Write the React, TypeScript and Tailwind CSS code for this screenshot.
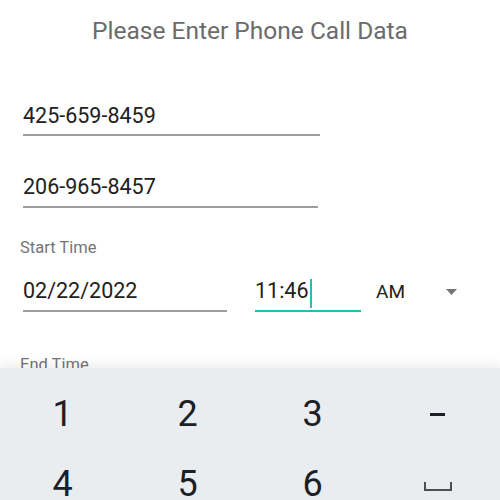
import React from 'react'

const font = "font-['Roboto','Liberation_Sans',sans-serif]"

function Field({ value, width }: { value: string; width: string }) {
    return (
        <div className={`ml-[3px] ${width}`}>
            <div className="text-[21.5px] leading-none text-[#212121]">{value}</div>
            <div className="mt-[8px] h-[2px] bg-[#9e9e9e]" />
        </div>
    )
}

export default function App() {
    const rows = [
        ['1', '2', '3', '−'],
        ['4', '5', '6', 'space'],
    ]

    return (
        <div className={`w-[500px] h-[500px] bg-white overflow-hidden flex flex-col ${font}`}>
            {/* Form */}
            <div className="h-[368px] shrink-0 overflow-hidden px-[20px]">
                <h1 className="pt-[19px] text-center text-[24.5px] leading-none text-[#6b6b6b] font-normal">
                    Please Enter Phone Call Data
                </h1>

                <div className="mt-[61px]">
                    <Field value="425-659-8459" width="w-[297px]" />
                </div>
                <div className="mt-[40px]">
                    <Field value="206-965-8457" width="w-[295px]" />
                </div>

                <div className="mt-[32px] text-[16.5px] leading-none text-[#757575]">Start Time</div>

                <div className="mt-[24px] flex items-start">
                    <Field value="02/22/2022" width="w-[204px]" />
                    <div className="ml-[28px] w-[106px]">
                        <div className="h-[21.5px] flex items-center text-[21.5px] leading-none text-[#212121]">
                            11:46
                            <span className="ml-px w-[2px] h-[29px] bg-[#26bfae] -mb-[6px]" />
                        </div>
                        <div className="mt-[8px] h-[2px] bg-[#26bfae]" />
                    </div>
                    <div className="ml-[15px] pt-[2px] text-[19px] leading-none text-[#212121]">AM</div>
                    <svg className="ml-[41px] mt-[9px]" width="11" height="6" viewBox="0 0 11 6">
                        <path d="M0 0 H11 L5.5 6 Z" fill="#757575" />
                    </svg>
                </div>

                <div className="mt-[45px] text-[16.5px] leading-none text-[#757575]">End Time</div>
            </div>

            {/* Numeric keyboard */}
            <div className="relative flex-1 bg-[#e9edf0] shadow-[0_-5px_8px_rgba(0,0,0,0.06)] pt-[11px]">
                {rows.map((row, r) => (
                    <div key={r} className="grid grid-cols-4 h-[70px]">
                        {row.map(k => (
                            <div key={k} className="flex items-center justify-center text-[36px] leading-none text-[#1b2026]">
                                {k === 'space' ? (
                                    <svg width="28" height="9" viewBox="0 0 28 9" className="mt-[4px]">
                                        <path d="M1 0 V8 H27 V0" fill="none" stroke="#4a4f54" strokeWidth="2" />
                                    </svg>
                                ) : k === '−' ? (
                                    <div className="w-[15px] h-[3px] bg-[#1b2026]" />
                                ) : (
                                    k
                                )}
                            </div>
                        ))}
                    </div>
                ))}
            </div>
        </div>
    )
}
